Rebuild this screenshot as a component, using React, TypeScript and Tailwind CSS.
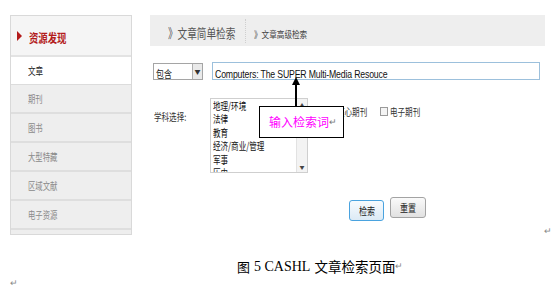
import React from "react";

const NAV_ITEMS = ["期刊", "图书", "大型特藏", "区域文献", "电子资源"];
const SUBJECTS = ["地理/环境", "法律", "教育", "经济/商业/管理", "军事", "历史"];

const cjk = "font-['Noto_Sans_CJK_SC',sans-serif]";

// screenshot text is squeezed horizontally, so narrow it with scale-x inside a fixed box
const Sq: React.FC<{ box: string; scale: string; className?: string; children: React.ReactNode }> = ({
  box,
  scale,
  className = "",
  children,
}) => (
  <span className={`inline-block whitespace-nowrap overflow-visible ${box}`}>
    <span className={`inline-block origin-left ${scale} ${className}`}>{children}</span>
  </span>
);

const Sidebar: React.FC = () => (
  <div className={`w-[122px] border border-[#d9d9d9] ${cjk}`}>
    <div className="h-[41px] bg-[#f5f5f5] border-b-2 border-[#e3e3e3] flex items-center pl-[6px]">
      <span className="w-0 h-0 border-y-[5px] border-y-transparent border-l-[5px] border-l-[#b31b1b]" />
      <Sq box="ml-[7px] w-[40px]" scale="scale-x-[0.78]" className="text-[12px] font-bold text-[#b31b1b]">
        资源发现
      </Sq>
    </div>
    <div className="h-[28px] bg-white border-b border-[#dcdcdc] flex items-center pl-[17px] text-[10.5px] text-[#222]">
      <span className="inline-block origin-left scale-x-[0.72]">文章</span>
    </div>
    {NAV_ITEMS.map((item) => (
      <div
        key={item}
        className="h-[29px] bg-[#eeeeee] border-b-2 border-[#dedede] flex items-center pl-[17px] text-[10.5px] text-[#8a8a8a]"
      >
        <span className="inline-block origin-left scale-x-[0.7]">{item}</span>
      </div>
    ))}
    <div className="h-[4px] bg-[#eeeeee]" />
  </div>
);

const SearchPanel: React.FC = () => (
  <div className={`w-[395px] ${cjk}`}>
    {/* tabs */}
    <div className="h-[31px] bg-[#eeeeee] flex items-center">
      <Sq box="ml-[18px] w-[68px]" scale="scale-x-[0.74]" className="text-[13px] text-[#555]">
        》文章简单检索
      </Sq>
      <span className="ml-[9px] h-[24px] border-l border-dotted border-[#cfcfcf]" />
      <Sq box="ml-[8px] w-[56px]" scale="scale-x-[0.8]" className="text-[9.5px] text-[#444]">
        》文章高级检索
      </Sq>
    </div>

    {/* keyword row */}
    <div className="mt-[16px] flex items-center">
      <div className="ml-[3px] w-[50px] h-[17px] border border-[#a5a5a5] flex items-center justify-between bg-white">
        <Sq box="ml-[2px] w-[20px]" scale="scale-x-[0.8]" className="text-[10px] text-[#222] leading-none">
          包含
        </Sq>
        <span className="w-[10px] h-[15px] bg-[#eaeaea] border-l border-[#b0b0b0] flex items-center justify-center text-[6px] text-[#333]">
          ▼
        </span>
      </div>
      <div className="ml-[9px] w-[328px] h-[18px] border border-[#9cc0dc] bg-white flex items-center">
        <Sq
          box="ml-[2px] w-[170px]"
          scale="scale-x-[0.83]"
          className="text-[10.5px] text-[#111] font-['Liberation_Sans',sans-serif] tracking-[-0.2px]"
        >
          Computers: The SUPER Multi-Media Resouce
        </Sq>
      </div>
    </div>

    {/* subject row */}
    <div className="mt-[18px] flex items-start">
      <Sq box="ml-[4px] mt-[4px] w-[40px]" scale="scale-x-[0.72]" className="text-[10.5px] text-[#333]">
        学科选择:
      </Sq>
      <div className="ml-[16px] w-[98px] h-[75px] border border-[#cfcfcf] flex overflow-hidden">
        <div className="flex-1 pl-[2px] flex flex-col text-[10.5px] leading-[13.4px] text-[#111]">
          {SUBJECTS.map((s) => (
            <span key={s} className="inline-block origin-left scale-x-[0.72] whitespace-nowrap">
              {s}
            </span>
          ))}
        </div>
        <div className="w-[11px] border-l border-[#e2e2e2] bg-[#f3f3f3] flex flex-col justify-between items-center text-[5px] text-[#444] py-[2px]">
          <span>▲</span>
          <span>▼</span>
        </div>
      </div>
      <div className="ml-[19px] mt-[6px] flex items-center text-[10.5px] text-[#333]">
        <span className="w-[8px] h-[9px] border border-[#9a9a9a] bg-[#f4f4f4]" />
        <Sq box="ml-[2px] w-[43px]" scale="scale-x-[0.72]">
          核心期刊
        </Sq>
        <span className="w-[8px] h-[9px] border border-[#9a9a9a] bg-[#f4f4f4]" />
        <Sq box="ml-[2px] w-[32px]" scale="scale-x-[0.72]">
          电子期刊
        </Sq>
      </div>
    </div>

    {/* buttons */}
    <div className="mt-[24px] flex items-start">
      <button className="ml-[199px] mt-[3px] w-[35px] h-[21px] rounded-[3px] border border-[#4aa3df] bg-gradient-to-b from-[#f7fbfe] to-[#dceaf5] text-[10px] text-[#222]">
        <span className="inline-block scale-x-[0.8]">检索</span>
      </button>
      <button className="ml-[6px] w-[36px] h-[21px] rounded-[3px] border border-[#a3a3a3] bg-gradient-to-b from-[#fafafa] to-[#e1e1e1] text-[10px] text-[#222]">
        <span className="inline-block scale-x-[0.8]">重置</span>
      </button>
    </div>
  </div>
);

const App: React.FC = () => (
  <div className="relative w-[560px] h-[291px] bg-white overflow-hidden">
    <div className="pt-[15px] pl-[10px] flex">
      <Sidebar />
      <div className="ml-[18px]">
        <SearchPanel />
      </div>
    </div>

    {/* annotation arrow */}
    <div className="absolute left-[295px] top-[83px] w-[1.5px] h-[24px] bg-black" />
    <div className="absolute left-[292px] top-[77px] w-0 h-0 border-x-[4px] border-x-transparent border-b-[8px] border-b-black" />
    <div className="absolute left-[259px] top-[106px] w-[85px] h-[32px] border border-black bg-white flex items-center pl-[9px]">
      <span className="text-[12px] text-[#ff00ff] font-['Noto_Sans_CJK_SC',sans-serif]">输入检索词</span>
      <span className="text-[9px] text-[#777]">↵</span>
    </div>

    {/* paragraph marks */}
    <span className="absolute left-[544px] top-[224px] text-[9px] text-[#888]">↵</span>
    <span className="absolute left-[10px] top-[277px] text-[9px] leading-[12px] text-[#888]">↵</span>

    {/* caption */}
    <div className="absolute left-[237px] top-[256px] flex items-center text-[14px] text-black font-['Liberation_Serif','Noto_Sans_CJK_SC',serif]">
      <span className="font-['Noto_Sans_CJK_SC',sans-serif] text-[13px]">图</span>
      <span className="ml-[4px]">5 CASHL</span>
      <span className="ml-[4px] font-['Noto_Sans_CJK_SC',sans-serif] text-[13.5px]">文章检索页面</span>
      <span className="text-[9px] text-[#888]">↵</span>
    </div>
  </div>
);

export default App;
